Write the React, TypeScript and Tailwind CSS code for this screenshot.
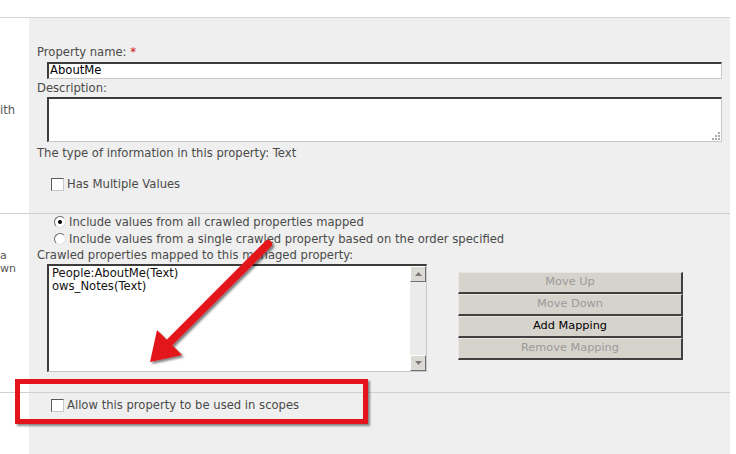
const font = "font-['DejaVu_Sans',Verdana,sans-serif]";

function CheckBox() {
  return (
    <span className="inline-block h-[13px] w-[13px] shrink-0 border border-t-[#5a5a5a] border-l-[#5a5a5a] border-r-[#c8c8c8] border-b-[#c8c8c8] bg-white" />
  );
}

function Radio({ checked }: { checked?: boolean }) {
  return (
    <span className="relative inline-flex h-[12px] w-[12px] shrink-0 items-center justify-center rounded-full border border-t-[#6a6a6a] border-l-[#6a6a6a] border-r-[#e0e0e0] border-b-[#e0e0e0] bg-white">
      {checked ? <span className="h-[4px] w-[4px] rounded-full bg-black" /> : null}
    </span>
  );
}

function MapButton({ label, enabled }: { label: string; enabled?: boolean }) {
  return (
    <div
      className={`flex h-[22px] items-center justify-center border-t border-l border-t-[#e8e6e0] border-l-[#e8e6e0] border-r-2 border-b-2 border-r-[#404040] border-b-[#404040] bg-[#d6d3cc] text-[11.3px] ${
        enabled ? "text-black" : "text-[#9a9a9a]"
      }`}
    >
      {label}
    </div>
  );
}

function ScrollArrow({ up }: { up?: boolean }) {
  return (
    <div className="flex h-[16px] w-[16px] items-center justify-center border border-t-white border-l-white border-r-[#707070] border-b-[#707070] bg-[#dcdad5]">
      <svg width="7" height="4" viewBox="0 0 7 4">
        <path d={up ? "M0 4 L3.5 0 L7 4 Z" : "M0 0 L3.5 4 L7 0 Z"} fill="#7a7a7a" />
      </svg>
    </div>
  );
}

export default function App() {
  return (
    <div className={`relative h-[454px] w-[736px] overflow-hidden bg-white ${font} text-[11.6px] text-[#4a4a4a]`}>
      <div className="h-[17px]" />

      {/* section 1 */}
      <div className="flex h-[196px] w-[730px] border-t border-[#d4d4d4]">
        <div className="w-[29px] shrink-0 bg-white pt-[84px] text-[#555]">ith</div>
        <div className="flex-1 bg-[#efefef] pl-[8px] pt-[27px]">
          <div className="h-[14px] leading-[14px]">
            Property name: <span className="text-[#d01010]">*</span>
          </div>
          <div className="ml-[10px] mt-[3px] h-[17px] w-[675px] border-t-2 border-l-2 border-r border-b border-t-[#3c3c3c] border-l-[#3c3c3c] border-r-[#c8c8c8] border-b-[#c8c8c8] bg-white pl-[1px] leading-[13px] text-black">
            AboutMe
          </div>
          <div className="mt-[2px] h-[14px] leading-[14px]">Description:</div>
          <div className="relative ml-[10px] mt-[2px] h-[45px] w-[675px] border-t-2 border-l-2 border-r border-b border-t-[#3c3c3c] border-l-[#3c3c3c] border-r-[#c8c8c8] border-b-[#c8c8c8] bg-white">
            <svg className="absolute bottom-[1px] right-[1px]" width="8" height="8" viewBox="0 0 8 8">
              <rect x="6" y="0" width="2" height="2" fill="#aaa" />
              <rect x="3" y="3" width="2" height="2" fill="#aaa" />
              <rect x="6" y="3" width="2" height="2" fill="#aaa" />
              <rect x="0" y="6" width="2" height="2" fill="#aaa" />
              <rect x="3" y="6" width="2" height="2" fill="#aaa" />
              <rect x="6" y="6" width="2" height="2" fill="#aaa" />
            </svg>
          </div>
          <div className="mt-[4px] h-[14px] leading-[14px]">
            The type of information in this property: Text
          </div>
          <div className="ml-[14px] mt-[17px] flex h-[14px] items-center gap-[3px] leading-[14px]">
            <CheckBox />
            <span>Has Multiple Values</span>
          </div>
        </div>
      </div>

      {/* section 2 */}
      <div className="flex h-[179px] w-[730px] border-t border-[#d0d0d0]">
        <div className="w-[29px] shrink-0 bg-white pt-[35px] text-[11px] leading-[13px] text-[#555]">
          <div>a</div>
          <div>wn</div>
        </div>
        <div className="flex-1 bg-[#efefef] pl-[8px]">
          <div className="ml-[17px] mt-[1px] flex h-[14px] items-center gap-[3px] leading-[14px]">
            <Radio checked />
            <span>Include values from all crawled properties mapped</span>
          </div>
          <div className="ml-[17px] mt-[3px] flex h-[14px] items-center gap-[3px] leading-[14px]">
            <Radio />
            <span>Include values from a single crawled property based on the order specified</span>
          </div>
          <div className="mt-[2px] h-[14px] leading-[14px]">
            Crawled properties mapped to this managed property:
          </div>
          <div className="ml-[10px] mt-[2px] flex items-start">
            <div className="flex h-[108px] w-[380px] border-t-2 border-l-2 border-r border-b border-t-[#3c3c3c] border-l-[#3c3c3c] border-r-[#c8c8c8] border-b-[#c8c8c8] bg-white">
              <div className="flex-1 pl-[3px] pt-[1px] leading-[13px] text-[#111]">
                <div>People:AboutMe(Text)</div>
                <div>ows_Notes(Text)</div>
              </div>
              <div className="flex w-[16px] flex-col justify-between bg-[#ebebeb]">
                <ScrollArrow up />
                <ScrollArrow />
              </div>
            </div>
            <div className="ml-[31px] mt-[8px] w-[225px]">
              <MapButton label="Move Up" />
              <MapButton label="Move Down" />
              <MapButton label="Add Mapping" enabled />
              <MapButton label="Remove Mapping" />
            </div>
          </div>
        </div>
      </div>

      {/* section 3 */}
      <div className="flex h-[62px] w-[730px] border-t border-[#d0d0d0]">
        <div className="w-[29px] shrink-0 bg-white" />
        <div className="flex-1 bg-[#efefef] pl-[22px] pt-[5px]">
          <div className="flex h-[14px] items-center gap-[3px] leading-[14px]">
            <CheckBox />
            <span>Allow this property to be used in scopes</span>
          </div>
        </div>
      </div>

      {/* annotation: red box */}
      <div className="absolute left-[15px] top-[379px] h-[45px] w-[353px] border-[5px] border-[#e3141b] shadow-[2px_2px_2px_rgba(0,0,0,0.45)]" />

      {/* annotation: red arrow */}
      <svg className="absolute left-0 top-0" width="736" height="454" viewBox="0 0 736 454">
        <defs>
          <filter id="sh" x="-20%" y="-20%" width="140%" height="140%">
            <feDropShadow dx="2" dy="2" stdDeviation="1.2" floodColor="#000" floodOpacity="0.5" />
          </filter>
        </defs>
        <g filter="url(#sh)">
          <line x1="268" y1="244" x2="170" y2="342" stroke="#e3141b" strokeWidth="8" strokeLinecap="round" />
          <path d="M150 362 L157 330 L182 355 Z" fill="#e3141b" />
        </g>
      </svg>
    </div>
  );
}
